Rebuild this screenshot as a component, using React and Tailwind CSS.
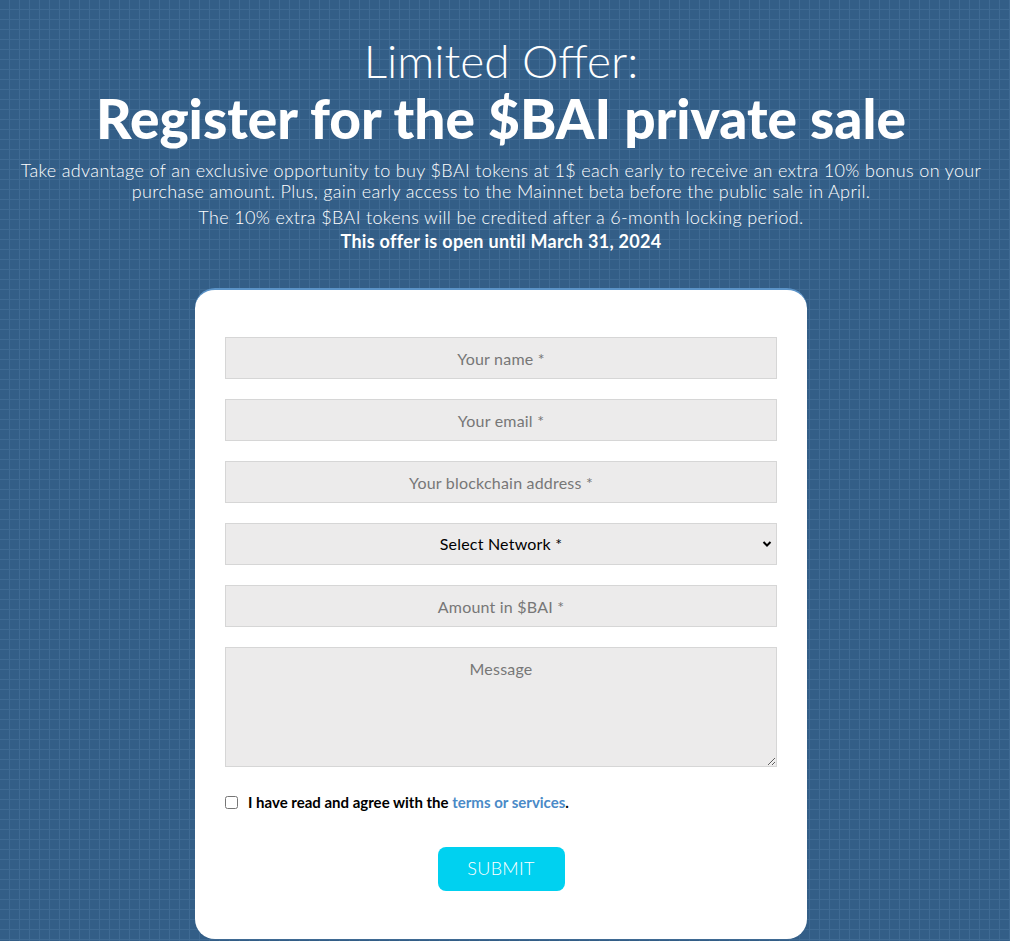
import React from "react";

const Field = ({ placeholder }) => (
  <input
    type="text"
    placeholder={placeholder}
    className="h-[42px] w-full border border-[#d6d6d6] bg-[#ecebeb] text-center text-[16px] tracking-[0.2px] text-[#333] placeholder:text-[#777] outline-none"
  />
);

export default function App() {
  return (
    <div
      className="min-h-[941px] w-full bg-[#335e87] bg-[linear-gradient(to_right,#3f6a93_1px,transparent_1px),linear-gradient(to_bottom,#3f6a93_1px,transparent_1px)] bg-[size:10px_10px] bg-[position:9px_9px] pr-[8px] text-white"
      style={{ fontFamily: "Lato, 'Open Sans', sans-serif" }}
    >
      <div className="flex flex-col items-center pt-[34px] text-center">
        <h2 className="text-[46px] leading-[54px] font-light">Limited Offer:</h2>
        <h1 className="text-[55px] leading-[60px] font-black">
          Register for the $BAI private sale
        </h1>
        <p className="mt-[12px] max-w-[985px] text-[18px] leading-[21px] font-light tracking-[0.35px]">
          Take advantage of an exclusive opportunity to buy $BAI tokens at 1$ each early to receive an extra 10% bonus on your purchase amount. Plus, gain early access to the Mainnet beta before the public sale in April.
        </p>
        <p className="mt-[3px] text-[18px] leading-[24px] font-light tracking-[0.35px]">
          The 10% extra $BAI tokens will be credited after a 6-month locking period.
        </p>
        <p className="text-[18px] leading-[25px] font-bold tracking-[0.3px]">This offer is open until March 31, 2024</p>
      </div>

      <div className="mx-auto mt-[34px] w-[612px] rounded-[20px] border-t-2 border-[#5b93c7] bg-white px-[30px] pt-[47px] pb-[48px]">
        <form className="flex flex-col gap-[20px]" onSubmit={(e) => e.preventDefault()}>
          <Field placeholder="Your name *" />
          <Field placeholder="Your email *" />
          <Field placeholder="Your blockchain address *" />
          <div className="relative">
            <select className="h-[42px] w-full appearance-none border border-[#d6d6d6] bg-[#ecebeb] text-center text-[16px] tracking-[0.2px] text-black outline-none">
              <option>Select Network *</option>
            </select>
            <svg
              className="pointer-events-none absolute right-[5px] top-[16px] h-[10px] w-[10px] text-black"
              viewBox="0 0 10 10"
              fill="none"
              stroke="currentColor"
              strokeWidth="2"
            >
              <path d="M1.5 3l3.5 3.5L8.5 3" />
            </svg>
          </div>
          <Field placeholder="Amount in $BAI *" />
          <textarea
            placeholder="Message"
            className="h-[120px] w-full resize-y border border-[#d6d6d6] bg-[#ecebeb] pt-[9px] text-center text-[16px] tracking-[0.2px] text-[#333] placeholder:text-[#777] outline-none"
          />
          <label className="mt-[4px] flex items-center gap-[10px] text-[15px] font-bold text-black">
            <input type="checkbox" className="h-[13px] w-[13px]" />
            <span>
              I have read and agree with the{" "}
              <a href="#" className="text-[#4a8ac7]">terms or services</a>.
            </span>
          </label>
          <div className="mt-[13px] flex justify-center">
            <button
              type="submit"
              className="h-[44px] w-[127px] rounded-[8px] bg-[#00d1f0] text-[18px] font-light tracking-[0.3px] text-white"
            >
              SUBMIT
            </button>
          </div>
        </form>
      </div>
    </div>
  );
}
